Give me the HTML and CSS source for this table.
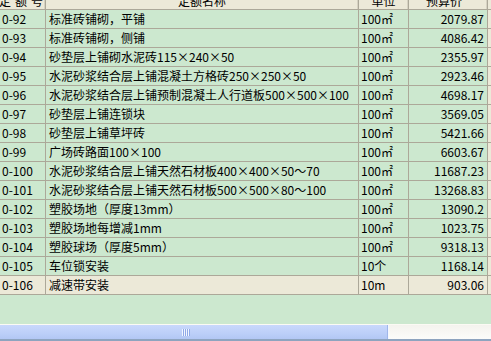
FILE: index.html
```html
<!DOCTYPE html>
<html lang="zh-CN">
<head>
<meta charset="utf-8">
<title>定额</title>
<link rel="stylesheet" href="styles.css">
</head>
<body>
<div class="view">
  <div class="grid">
    <div class="hd c1"><span class="wide">定额号</span></div>
    <div class="hd c2"><span>定额名称</span></div>
    <div class="hd c3"><span>单位</span></div>
    <div class="hd c4"><span>预算价</span></div>
    <div class="hd c5"></div>

    <div class="td c1">0-92</div><div class="td c2">标准砖铺砌，平铺</div><div class="td c3">100㎡</div><div class="td c4">2079.87</div><div class="td c5"></div>
    <div class="td c1">0-93</div><div class="td c2">标准砖铺砌，侧铺</div><div class="td c3">100㎡</div><div class="td c4">4086.42</div><div class="td c5"></div>
    <div class="td c1">0-94</div><div class="td c2">砂垫层上铺砌水泥砖115×240×50</div><div class="td c3">100㎡</div><div class="td c4">2355.97</div><div class="td c5"></div>
    <div class="td c1">0-95</div><div class="td c2">水泥砂浆结合层上铺混凝土方格砖250×250×50</div><div class="td c3">100㎡</div><div class="td c4">2923.46</div><div class="td c5"></div>
    <div class="td c1">0-96</div><div class="td c2">水泥砂浆结合层上铺预制混凝土人行道板500×500×100</div><div class="td c3">100㎡</div><div class="td c4">4698.17</div><div class="td c5"></div>
    <div class="td c1">0-97</div><div class="td c2">砂垫层上铺连锁块</div><div class="td c3">100㎡</div><div class="td c4">3569.05</div><div class="td c5"></div>
    <div class="td c1">0-98</div><div class="td c2">砂垫层上铺草坪砖</div><div class="td c3">100㎡</div><div class="td c4">5421.66</div><div class="td c5"></div>
    <div class="td c1">0-99</div><div class="td c2">广场砖路面100×100</div><div class="td c3">100㎡</div><div class="td c4">6603.67</div><div class="td c5"></div>
    <div class="td c1">0-100</div><div class="td c2">水泥砂浆结合层上铺天然石材板400×400×50～70</div><div class="td c3">100㎡</div><div class="td c4">11687.23</div><div class="td c5"></div>
    <div class="td c1">0-101</div><div class="td c2">水泥砂浆结合层上铺天然石材板500×500×80～100</div><div class="td c3">100㎡</div><div class="td c4">13268.83</div><div class="td c5"></div>
    <div class="td c1">0-102</div><div class="td c2">塑胶场地（厚度13mm）</div><div class="td c3">100㎡</div><div class="td c4">13090.2</div><div class="td c5"></div>
    <div class="td c1">0-103</div><div class="td c2">塑胶场地每增减1mm</div><div class="td c3">100㎡</div><div class="td c4">1023.75</div><div class="td c5"></div>
    <div class="td c1">0-104</div><div class="td c2">塑胶球场（厚度5mm）</div><div class="td c3">100㎡</div><div class="td c4">9318.13</div><div class="td c5"></div>
    <div class="td c1">0-105</div><div class="td c2">车位锁安装</div><div class="td c3">10个</div><div class="td c4">1168.14</div><div class="td c5"></div>
    <div class="td c1 sel">0-106</div><div class="td c2 sel">减速带安装</div><div class="td c3 sel">10m</div><div class="td c4 sel">903.06</div><div class="td c5 sel"></div>
  </div>
  <div class="filler"></div>
  <div class="hscroll">
    <div class="thumb"><span class="grip"></span></div>
    <div class="track"></div>
  </div>
</div>
</body>
</html>
```

FILE: styles.css
```css
* { box-sizing: border-box; }
html, body { margin: 0; padding: 0; }
body {
  width: 491px;
  height: 341px;
  overflow: hidden;
  background: #cce8cf;
  font-family: "Noto Sans CJK SC", "Noto Sans", sans-serif;
  font-size: 12px;
  color: #000;
}
.view {
  display: flex;
  flex-direction: column;
  height: 341px;
}
.grid {
  display: grid;
  grid-template-columns: 46px 313px 50px 79px 3px;
  grid-auto-rows: 19px;
  grid-template-rows: 10px;
}
.hd {
  background: #ece9d8;
  border-right: 1px solid #aca899;
  border-bottom: 1px solid #aca899;
  box-shadow: inset -1px 0 0 #d6d2c2;
  overflow: hidden;
  display: flex;
  justify-content: center;
  align-items: flex-start;
  white-space: nowrap;
}
.hd span {
  display: block;
  line-height: 12px;
  margin-top: -5px;
}
.hd .wide { letter-spacing: 4px; margin-right: -4px; }
.hd.c1 { justify-content: flex-end; padding-right: 2px; }
.hd.c4 { padding-right: 8px; }
.hd.c5 { border-right: none; box-shadow: none; }
.td {
  border-right: 1px solid #aca899;
  border-bottom: 1px solid #aca899;
  line-height: 18px;
  white-space: nowrap;
  overflow: hidden;
}
.td.c1 { padding-left: 2px; }
.td.c2 { padding-left: 3px; }
.td.c3 { padding-left: 2px; }
.td.c4 { text-align: right; padding-right: 3px; }
.td.c5 { background: #ece9d8; border-right: none; }
.td.sel { background: #ece9d8; }
.filler { flex: 1; }
.hscroll {
  height: 17px;
  display: flex;
  border-top: 1px solid #fbfaf4;
  border-bottom: 2px solid #8ea4bf;
}
.thumb {
  width: 389px;
  background: linear-gradient(#c9d8fc, #bccff8 60%, #b2c7f4);
  border-right: 1px solid #f4f7ff;
  box-shadow: inset -1px 0 0 #9fb6ea;
  display: flex;
  align-items: center;
  justify-content: center;
  padding-right: 16px;
}
.grip {
  width: 8px;
  height: 7px;
  background: repeating-linear-gradient(90deg, #f2f6ff 0 1px, #8fa9e8 1px 2px);
}
.track {
  flex: 1;
  background: linear-gradient(#f4f3ee, #fcfcfa);
}
```
